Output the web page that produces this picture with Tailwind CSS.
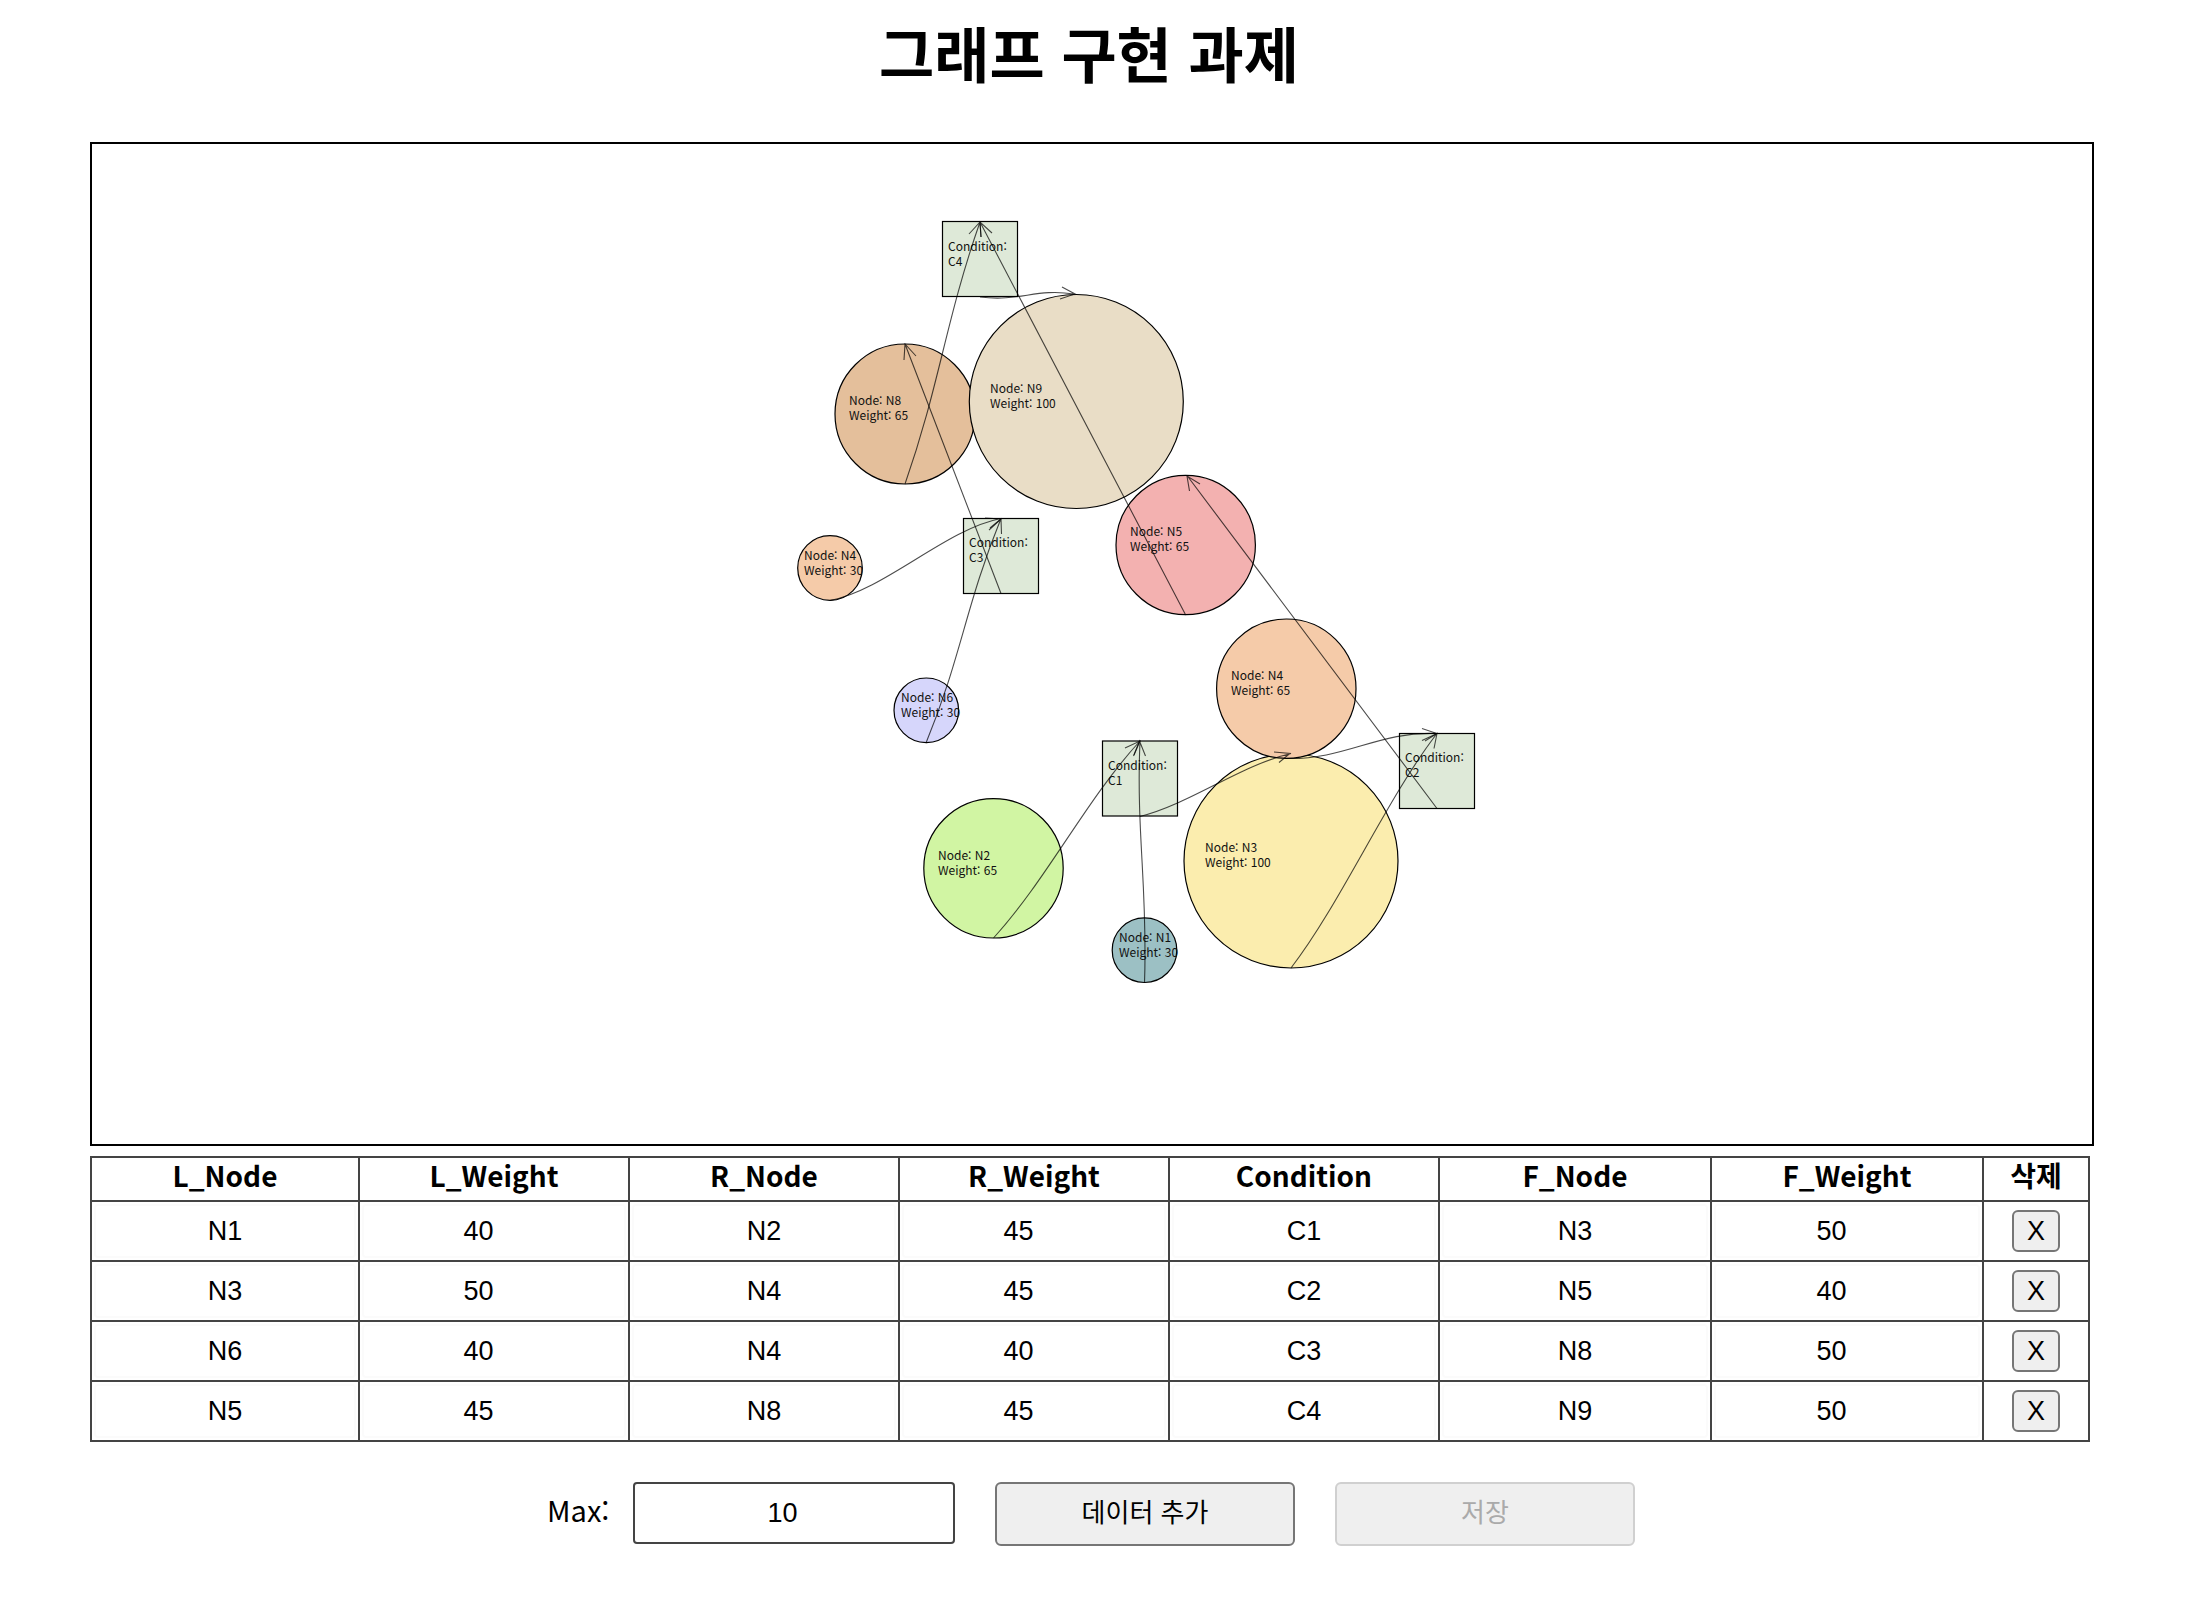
<!DOCTYPE html>
<html lang="ko">
<head>
<meta charset="utf-8">
<title>그래프 구현 과제</title>
<script src="https://cdn.jsdelivr.net/npm/@tailwindcss/browser@4"></script>
</head>
<body class="bg-white text-black font-['Noto_Sans_CJK_KR',sans-serif]">
<main class="flex flex-col pl-[90px] pr-[114px] pb-10">
  <h1 class="h-[142px] pt-[8px] pr-[6px] text-center text-[60px] leading-[88px] font-bold">그래프 구현 과제</h1>

  <section class="border-2 border-black" aria-label="그래프">
    <svg class="block w-full text-[12px]" viewBox="92 144 2000 1000">
      <g stroke="#000" stroke-width="1.2">
        <circle cx="1291" cy="861" r="107" fill="#fbedae"/>
        <circle cx="905" cy="414" r="70" fill="#e4bf9b"/>
        <circle cx="1076.3" cy="401.5" r="107" fill="#e9ddc6"/>
        <circle cx="830" cy="568" r="32.3" fill="#f5cba9"/>
        <circle cx="926.3" cy="710.3" r="32.3" fill="#d6d6fb"/>
        <circle cx="1185.7" cy="545" r="69.7" fill="#f3b1b0"/>
        <circle cx="1286.3" cy="688.7" r="69.7" fill="#f5cba9"/>
        <circle cx="993.5" cy="868.3" r="69.7" fill="#d1f5a3"/>
        <circle cx="1144.5" cy="950.2" r="32.3" fill="#9cc0c4"/>
        <g fill="#dee9d8">
          <rect x="942.5" y="221.5" width="75" height="75"/>
          <rect x="963.5" y="518.5" width="75" height="75"/>
          <rect x="1102.5" y="741" width="75" height="75"/>
          <rect x="1399.5" y="733.5" width="75" height="75"/>
        </g>
      </g>
      <g fill="#111">
        <text x="948" y="251">Condition:<tspan x="948" dy="15">C4</tspan></text>
        <text x="969" y="547">Condition:<tspan x="969" dy="15">C3</tspan></text>
        <text x="1108" y="770">Condition:<tspan x="1108" dy="15">C1</tspan></text>
        <text x="1405" y="762">Condition:<tspan x="1405" dy="15">C2</tspan></text>
        <text x="990" y="393">Node: N9<tspan x="990" dy="15">Weight: 100</tspan></text>
        <text x="849" y="405">Node: N8<tspan x="849" dy="15">Weight: 65</tspan></text>
        <text x="804" y="560">Node: N4<tspan x="804" dy="15">Weight: 30</tspan></text>
        <text x="901" y="702">Node: N6<tspan x="901" dy="15">Weight: 30</tspan></text>
        <text x="1130" y="536">Node: N5<tspan x="1130" dy="15">Weight: 65</tspan></text>
        <text x="1231" y="680">Node: N4<tspan x="1231" dy="15">Weight: 65</tspan></text>
        <text x="938" y="860">Node: N2<tspan x="938" dy="15">Weight: 65</tspan></text>
        <text x="1119" y="942">Node: N1<tspan x="1119" dy="15">Weight: 30</tspan></text>
        <text x="1205" y="852">Node: N3<tspan x="1205" dy="15">Weight: 100</tspan></text>
      </g>
      <g fill="none" stroke="#000" stroke-opacity=".7" stroke-width="1.1">
        <path d="M905 484C940 384 945 322 980 222M969 234L980 222L981 237"/>
        <path d="M1185.7 615L980 222M981 237L980 222L992 233"/>
        <path d="M1001 593.5L905 344M904 360L905 344L916 356"/>
        <path d="M830 600.5C885 590 946 529 1001 518.5M985 518L1001 519L989 530"/>
        <path d="M926 743C961 658 966 604 1001 518.5M990 528L1001 519L1001.5 534"/>
        <path d="M993.5 938C1048 878 1085 801 1140 741M1125 748L1140 741L1134 755"/>
        <path d="M1144.5 983C1148 890 1136 833 1140 741M1133.5 756L1139.5 741L1145.5 756"/>
        <path d="M1140 816.5C1190 804 1241 765 1291 753.5M1274 752L1290 753.5L1279 762.5"/>
        <path d="M1286 758.5C1346 760 1378 731 1437 733.5M1422 728.5L1437 733.5L1422 740.5"/>
        <path d="M1291 968C1341 903 1387 798 1437 733.5M1425 741L1437 733.5L1434 748.5"/>
        <path d="M1437 808.5L1187 475.5M1189.5 491L1187 476L1200 484"/>
        <path d="M980 297C1020 302 1036 288 1074 294M1062 287L1075 294L1060 299"/>
      </g>
    </svg>
  </section>

  <div class="pt-[10px] pr-1">
    <table class="w-full table-fixed border-collapse text-center">
      <colgroup>
        <col class="w-[13.4%]"><col class="w-[13.5%]"><col class="w-[13.5%]"><col class="w-[13.5%]"><col class="w-[13.5%]"><col class="w-[13.6%]"><col class="w-[13.6%]"><col class="w-[5.3%]">
      </colgroup>
      <thead>
        <tr class="h-[44px] text-[28px] leading-[32px] *:border-2 *:border-[#444] *:p-0 *:pb-[9px] *:font-bold">
          <th scope="col">L_Node</th><th scope="col">L_Weight</th><th scope="col">R_Node</th><th scope="col">R_Weight</th><th scope="col">Condition</th><th scope="col">F_Node</th><th scope="col">F_Weight</th><th scope="col">삭제</th>
        </tr>
      </thead>
      <tbody id="rows"></tbody>
    </table>
  </div>

  <form class="flex items-start justify-center gap-[40px] pt-[40px] pr-[2px]">
    <div class="flex">
      <label for="max" class="w-[86px] text-[29px] leading-[54px]">Max:</label>
      <input id="max" type="number" value="10" class="h-[62px] w-[322px] rounded-[4px] border-2 border-[#444] bg-white pr-[8px] text-center text-[27px] font-['Liberation_Sans',sans-serif] [appearance:textfield]">
    </div>
    <button type="button" class="h-[64px] w-[300px] rounded-[6px] border-2 border-[#767676] bg-[#efefef] pb-[8px] text-[26px]">데이터 추가</button>
    <button type="button" disabled class="h-[64px] w-[300px] rounded-[6px] border-2 border-[#d0d0d0] bg-[#efefef] pb-[8px] text-[26px] text-[#aaa]">저장</button>
  </form>
</main>
<script>
const fields = ['L_Node', 'L_Weight', 'R_Node', 'R_Weight', 'Condition', 'F_Node', 'F_Weight'];
const data = [
  ['N1', 40, 'N2', 45, 'C1', 'N3', 50],
  ['N3', 50, 'N4', 45, 'C2', 'N5', 40],
  ['N6', 40, 'N4', 40, 'C3', 'N8', 50],
  ['N5', 45, 'N8', 45, 'C4', 'N9', 50]
];
const base = "block h-[54px] w-full rounded-[4px] border-2 border-[#fbfbfb] text-center text-[27px] font-['Liberation_Sans',sans-serif]";
document.getElementById('rows').innerHTML = data.map((row, r) =>
  '<tr class="h-[60px]">' + row.map((v, i) => {
    const num = typeof v === 'number';
    return `<td class="border-2 border-[#444] p-[2px]"><input type="${num ? 'number' : 'text'}" aria-label="${fields[i]} ${r + 1}" value="${v}" class="${base} ${num ? 'pr-[16px] [appearance:textfield]' : ''}"></td>`;
  }).join('') +
  `<td class="border-2 border-[#444] p-0"><button type="button" aria-label="X ${r + 1}" class="mx-auto block h-[42px] w-[48px] rounded-[6px] border-2 border-[#767676] bg-[#efefef] text-[27px] leading-[36px] font-['Liberation_Sans',sans-serif]">X</button></td></tr>`
).join('');
</script>
</body>
</html>
